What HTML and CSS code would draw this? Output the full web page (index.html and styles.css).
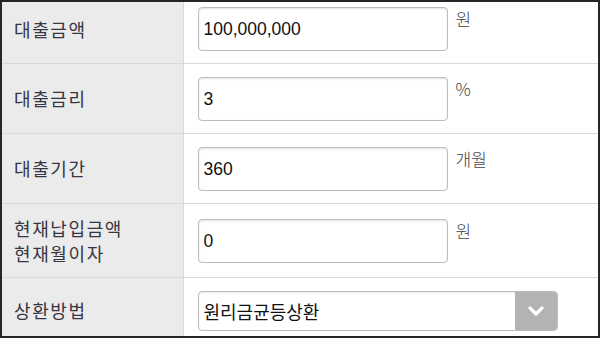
FILE: index.html
```html
<!DOCTYPE html>
<html lang="ko">
<head>
    <meta charset="UTF-8">
    <meta name="viewport" content="width=device-width, initial-scale=1.0">
    <title>대출 계산기</title>
    <link rel="stylesheet" href="styles.css">
</head>
<body>

    <div class="frame">
        <table class="loan-table">
            <tr class="first-row">
                <th>대출금액</th>
                <td>
                    <div class="field">
                        <input type="text" class="num-input" value="100,000,000">
                        <span class="unit">원</span>
                    </div>
                </td>
            </tr>
            <tr>
                <th>대출금리</th>
                <td>
                    <div class="field">
                        <input type="text" class="num-input" value="3">
                        <span class="unit">%</span>
                    </div>
                </td>
            </tr>
            <tr>
                <th>대출기간</th>
                <td>
                    <div class="field">
                        <input type="text" class="num-input" value="360">
                        <span class="unit">개월</span>
                    </div>
                </td>
            </tr>
            <tr class="tall-row">
                <th>현재납입금액<br>현재월이자</th>
                <td>
                    <div class="field">
                        <input type="text" class="num-input" value="0">
                        <span class="unit">원</span>
                    </div>
                </td>
            </tr>
            <tr>
                <th>상환방법</th>
                <td>
                    <div class="select-box">
                        <select class="method-select">
                            <option>원리금균등상환</option>
                            <option>원금균등상환</option>
                            <option>만기일시상환</option>
                        </select>
                        <span class="select-arrow">
                            <svg width="16" height="10" viewBox="0 0 16 10">
                                <path d="M2 2 L8 8 L14 2" fill="none" stroke="#fff" stroke-width="3.2" stroke-linecap="round" stroke-linejoin="round"/>
                            </svg>
                        </span>
                    </div>
                </td>
            </tr>
        </table>
    </div>

</body>
</html>
```

FILE: styles.css
```css
/* Reset */
* {
    margin: 0;
    padding: 0;
    box-sizing: border-box;
}

body {
    font-family: "Noto Sans CJK KR", "Liberation Sans", sans-serif;
    background-color: #ffffff;
    color: #333;
}

/* Outer frame */
.frame {
    width: 600px;
    height: 338px;
    border: 2px solid #262626;
    overflow: hidden;
    background-color: #fff;
}

.loan-table {
    width: 100%;
    border-collapse: collapse;
}

.loan-table tr {
    border-bottom: 1px solid #d9d9d9;
}

.loan-table th {
    width: 181px;
    background-color: #ebebeb;
    border-right: 1px solid #d9d9d9;
    text-align: left;
    font-weight: normal;
    font-size: 18px;
    letter-spacing: 1.6px;
    line-height: 25px;
    color: #363642;
    padding: 0 12px;
    vertical-align: middle;
}

.first-row th {
    padding-bottom: 7px;
}

.loan-table td {
    padding: 13px 14px 12px 14px;
    vertical-align: middle;
}

.first-row td {
    padding-top: 5px;
}

.tall-row td {
    padding-top: 15px;
    padding-bottom: 14px;
}

.field {
    display: flex;
    align-items: flex-start;
}

.num-input {
    width: 250px;
    height: 44px;
    border: 1px solid #bdbdbd;
    border-radius: 4px;
    box-shadow: inset 0 1px 2px rgba(0, 0, 0, 0.12);
    padding: 0 5px;
    font-family: "Liberation Sans", Arial, sans-serif;
    font-size: 17.5px;
    color: #111;
    background-color: #fff;
}

.unit {
    margin-left: 8px;
    margin-top: 1px;
    font-size: 17px;
    font-weight: 300;
    color: #444;
    line-height: 22px;
}

/* Select box */
.select-box {
    display: flex;
    width: 360px;
    height: 40px;
    border: 1px solid #bdbdbd;
    border-radius: 4px;
    overflow: hidden;
    box-shadow: inset 0 1px 2px rgba(0, 0, 0, 0.08);
}

.method-select {
    flex: 1;
    -webkit-appearance: none;
    appearance: none;
    border: none;
    background: transparent;
    padding: 0 5px;
    font-family: "Noto Sans CJK KR", "Liberation Sans", sans-serif;
    font-size: 18px;
    color: #111;
    outline: none;
}

.select-arrow {
    width: 42px;
    background-color: #b3b3b3;
    display: flex;
    align-items: center;
    justify-content: center;
}
```
